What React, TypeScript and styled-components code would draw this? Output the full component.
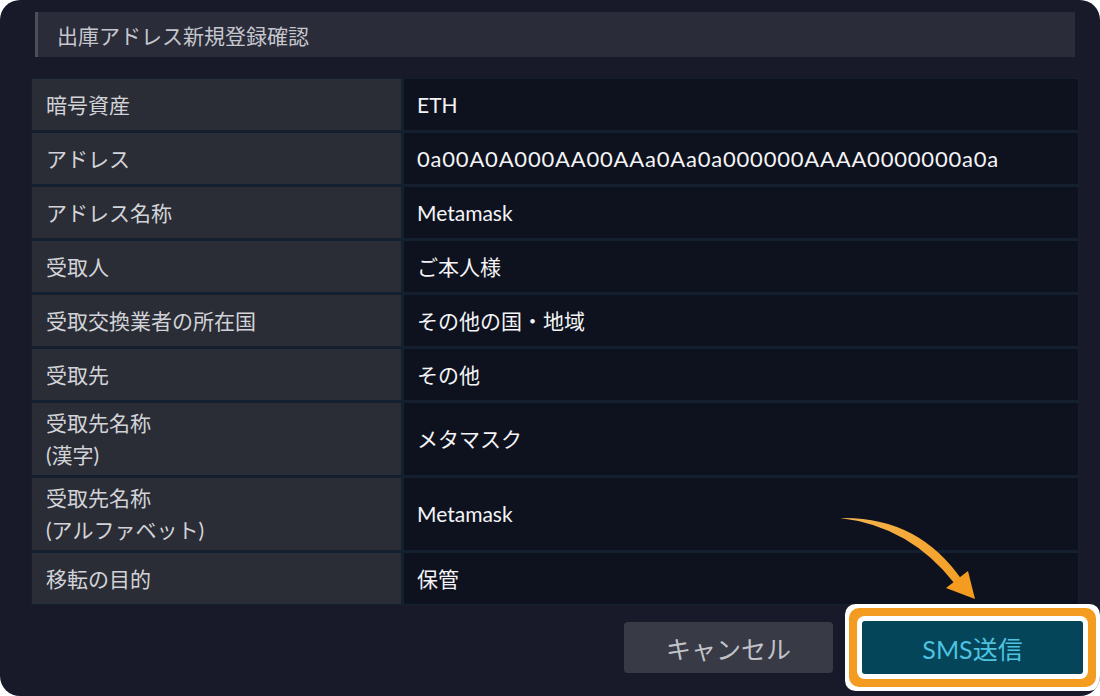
import React from 'react';
import styled, { createGlobalStyle } from 'styled-components';

const GlobalStyle = createGlobalStyle`
  html, body {
    margin: 0;
    padding: 0;
    background: #ffffff;
  }
  * {
    box-sizing: border-box;
  }
`;

const Panel = styled.div`
  position: relative;
  width: 1100px;
  height: 696px;
  background: #181a2a;
  border-radius: 20px;
  padding: 12px 21px 0 31px;
  font-family: Lato, 'Noto Sans CJK JP', sans-serif;
  overflow: hidden;
`;

const TitleBar = styled.div`
  display: flex;
  align-items: center;
  height: 45px;
  margin: 0 4px 0 4px;
  padding-left: 19px;
  background: #2a2c3a;
  border-left: 3px solid #4b4e5c;
  color: #c6c7cd;
  font-size: 21px;
`;

const Grid = styled.div`
  display: grid;
  grid-template-columns: 369px 1fr;
  gap: 3px;
  padding: 1px;
  margin-top: 21px;
  background: #142030;
`;

const Cell = styled.div<{ $label?: boolean; $tall?: boolean; $big?: boolean }>`
  display: flex;
  align-items: center;
  min-height: ${({ $tall }) => ($tall ? '72px' : '51px')};
  padding-left: ${({ $label }) => ($label ? '14px' : '13px')};
  background: ${({ $label }) => ($label ? '#2a2d35' : '#0d121e')};
  color: ${({ $label }) => ($label ? '#d2d3d8' : '#f4f4f6')};
  font-size: ${({ $big }) => ($big ? '22px' : '21px')};
  letter-spacing: ${({ $big }) => ($big ? '0.8px' : '0')};
  line-height: 32px;
`;

const Footer = styled.div`
  display: flex;
  justify-content: flex-end;
  align-items: center;
  gap: 29px;
  margin-top: 16px;
`;

const CancelButton = styled.button`
  width: 209px;
  height: 51px;
  border: none;
  border-radius: 4px;
  background: #383a46;
  color: #c2c3c8;
  font-family: Lato, 'Noto Sans CJK JP', sans-serif;
  font-size: 25px;
`;

const SendButton = styled.button`
  width: 221px;
  height: 53px;
  border: none;
  border-radius: 3px;
  background: #04455a;
  color: #4ec3e0;
  font-family: Lato, 'Noto Sans CJK JP', sans-serif;
  font-size: 25px;
  box-shadow: 0 0 0 5px #ffffff, 0 0 0 13px #f39c1f, 0 0 0 17px #ffffff;
  margin-right: -4px;
`;

const Arrow = styled.svg`
  position: absolute;
  left: 0;
  top: 0;
  pointer-events: none;
`;

interface Row {
  label: React.ReactNode;
  value: string;
  tall?: boolean;
  big?: boolean;
}

const rows: Row[] = [
  { label: '暗号資産', value: 'ETH' },
  { label: 'アドレス', value: '0a00A0A000AA00AAa0Aa0a000000AAAA0000000a0a', big: true },
  { label: 'アドレス名称', value: 'Metamask' },
  { label: '受取人', value: 'ご本人様' },
  { label: '受取交換業者の所在国', value: 'その他の国・地域' },
  { label: '受取先', value: 'その他' },
  { label: <>受取先名称<br />(漢字)</>, value: 'メタマスク', tall: true },
  { label: <>受取先名称<br />(アルファベット)</>, value: 'Metamask', tall: true },
  { label: '移転の目的', value: '保管' },
];

const App: React.FC = () => {
  return (
    <>
      <GlobalStyle />
      <Panel>
        <TitleBar>出庫アドレス新規登録確認</TitleBar>
        <Grid>
          {rows.map((row, i) => (
            <React.Fragment key={i}>
              <Cell $label $tall={row.tall}>
                <span>{row.label}</span>
              </Cell>
              <Cell $tall={row.tall} $big={row.big}>
                {row.value}
              </Cell>
            </React.Fragment>
          ))}
        </Grid>
        <Footer>
          <CancelButton>キャンセル</CancelButton>
          <SendButton>SMS送信</SendButton>
        </Footer>
        <Arrow width="1100" height="696" viewBox="0 0 1100 696">
          <defs>
            <linearGradient id="ag" x1="840" y1="518" x2="975" y2="598" gradientUnits="userSpaceOnUse">
              <stop offset="0" stopColor="#f6b450" />
              <stop offset="1" stopColor="#f39c1f" />
            </linearGradient>
          </defs>
          <path d="M840 518 Q918 516 962 580 L955 584 Q910 526 840 518 Z" fill="url(#ag)" />
          <path d="M946 588 L968 571 L975 599 Z" fill="#f39c1f" />
        </Arrow>
      </Panel>
    </>
  );
};

export default App;
